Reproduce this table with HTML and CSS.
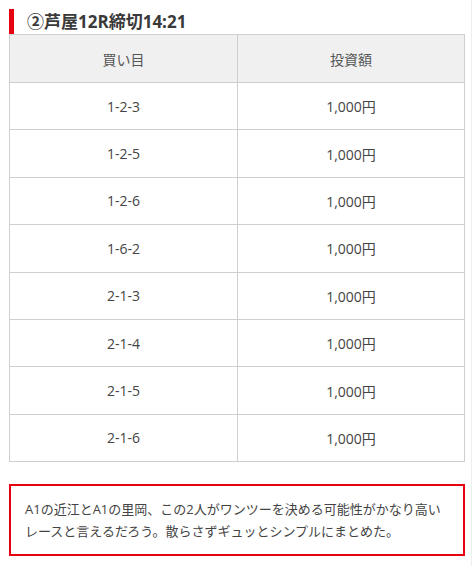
FILE: index.html
```html
<!DOCTYPE html>
<html lang="ja">
<head>
<meta charset="utf-8">
<link rel="stylesheet" href="styles.css">
</head>
<body>
<div class="page">
  <h2 class="title">②芦屋12R締切14:21</h2>
  <table class="bets">
    <thead>
      <tr><th>買い目</th><th>投資額</th></tr>
    </thead>
    <tbody>
      <tr><td>1-2-3</td><td>1,000円</td></tr>
      <tr><td>1-2-5</td><td>1,000円</td></tr>
      <tr><td>1-2-6</td><td>1,000円</td></tr>
      <tr><td>1-6-2</td><td>1,000円</td></tr>
      <tr><td>2-1-3</td><td>1,000円</td></tr>
      <tr><td>2-1-4</td><td>1,000円</td></tr>
      <tr><td>2-1-5</td><td>1,000円</td></tr>
      <tr><td>2-1-6</td><td>1,000円</td></tr>
    </tbody>
  </table>
  <div class="comment">
    <p>A1の近江とA1の里岡、この2人がワンツーを決める可能性がかなり高いレースと言えるだろう。散らさずギュッとシンプルにまとめた。</p>
  </div>
</div>
</body>
</html>
```
FILE: styles.css
```css
html, body {
  margin: 0;
  padding: 0;
  background: #fff;
}
body {
  font-family: "Open Sans", "Noto Sans CJK JP", sans-serif;
  color: #444;
}
.page {
  padding: 9px 0 0 9px;
  border-right: 1px solid #eee;
  min-height: 557px;
  box-sizing: content-box;
  width: 462px;
}
.title {
  margin: 0;
  height: 25px;
  border-left: 5px solid #e60012;
  padding-left: 13px;
  font-size: 17px;
  line-height: 25px;
  font-weight: bold;
  color: #3a3a3a;
}
.bets {
  width: 456px;
  border-collapse: collapse;
  table-layout: fixed;
  font-size: 14px;
}
.bets th,
.bets td {
  border: 1px solid #cfcfcf;
  text-align: center;
  font-weight: normal;
  padding: 0;
}
.bets th {
  height: 47px;
  background: #f0f0f0;
  color: #555;
}
.bets td {
  height: 46.4px;
  color: #444;
}
.bets th:first-child { width: 227px; }
.comment {
  margin-top: 22px;
  width: 456px;
  box-sizing: border-box;
  border: 2px solid #e60012;
  padding: 12px 14px 12px 14px;
}
.comment p {
  margin: 0;
  font-size: 13px;
  line-height: 22px;
  color: #444;
}
```
